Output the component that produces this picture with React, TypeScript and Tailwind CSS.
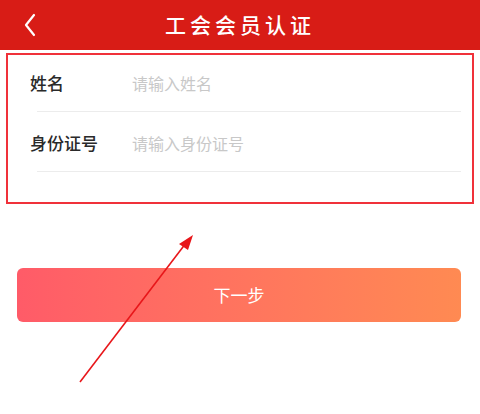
import React from 'react';

const font = { fontFamily: '"Noto Sans CJK SC", "Noto Sans", sans-serif' };

function FormRow({ label, placeholder, tall }: { label: string; placeholder: string; tall?: boolean }) {
  return (
    <div
      className={`ml-[29px] mr-[3px] flex items-center border-b border-[#ececec] ${tall ? 'h-[60px] pt-[3px]' : 'h-[57px]'}`}
    >
      <span className="-ml-[7px] w-[102px] text-[17px] font-medium text-[#2a2a2a]">{label}</span>
      <input
        className="flex-1 bg-transparent text-[16px] text-[#333] outline-none placeholder:text-[#c8c8c8]"
        placeholder={placeholder}
      />
    </div>
  );
}

export default function App() {
  return (
    <div className="relative h-[414px] w-[480px] overflow-hidden bg-white" style={font}>
      <header className="relative flex h-[50px] items-center justify-center bg-[#d81c16]">
        <button className="absolute left-[22px] top-[12px] text-white">
          <svg width="16" height="26" viewBox="0 0 16 26" fill="none">
            <path d="M12 3 L4 13 L12 23" stroke="white" strokeWidth="2.2" strokeLinecap="round" strokeLinejoin="round" />
          </svg>
        </button>
        <h1 className="text-[21px] font-medium tracking-[4px] text-white">工会会员认证</h1>
      </header>

      <div className="mx-[6px] mt-[3px] h-[151px] border-2 border-[#f0313a] pr-[8px]">
        <FormRow label="姓名" placeholder="请输入姓名" />
        <FormRow label="身份证号" placeholder="请输入身份证号" tall />
      </div>

      <div className="mt-[64px] px-[17px]">
        <button className="flex h-[54px] w-[444px] items-center justify-center rounded-[6px] bg-gradient-to-r from-[#ff5b68] to-[#ff8a52] text-[17px] text-white">
          下一步
        </button>
      </div>

      <svg className="pointer-events-none absolute left-0 top-0" width="480" height="414" viewBox="0 0 480 414">
        <line x1="80" y1="382" x2="186" y2="243" stroke="#e8161a" strokeWidth="1.6" />
        <polygon points="193,235 179,244 188,250" fill="#e8161a" />
      </svg>
    </div>
  );
}
